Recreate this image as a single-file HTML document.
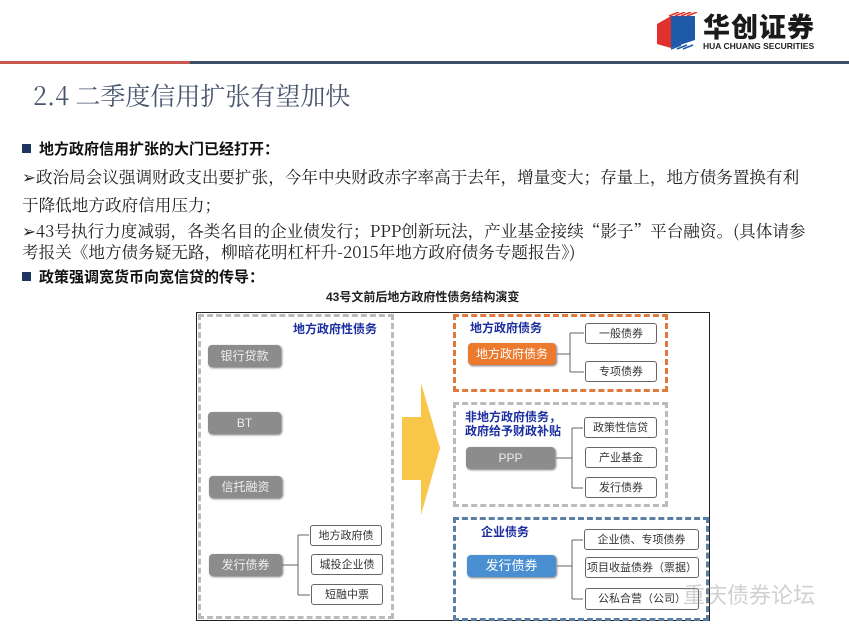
<!DOCTYPE html>
<html><head><meta charset="utf-8"><style>
body{margin:0;width:849px;height:639px;background:#fff;position:relative;overflow:hidden;font-family:"Noto Serif CJK SC","Liberation Serif",serif;color:#222}
.a{position:absolute;white-space:nowrap}
.h{font-family:"Liberation Sans","Noto Sans CJK SC",sans-serif;font-weight:bold;font-size:15px;color:#111}
.sq{display:inline-block;width:9px;height:9px;background:#1f3560;margin-right:8px;vertical-align:1px}
.t{font-size:16.6px;color:#222;line-height:20px}
.d{position:absolute;box-sizing:border-box}
.g{background:#8c8c8c;color:#eee;border-radius:4px;font-family:"Liberation Sans","Noto Sans CJK SC",sans-serif;font-size:12px;text-align:center;box-shadow:1px 1px 2px #777}
.w{background:#fff;border:1px solid #666;border-radius:3px;font-family:"Liberation Sans","Noto Sans CJK SC",sans-serif;font-size:11px;text-align:center;color:#333}
.bt{font-family:"Liberation Sans","Noto Sans CJK SC",sans-serif;font-weight:bold;font-size:12px;color:#1c2fa0}
</style></head><body>
<svg class="a" style="left:655px;top:12px" width="44" height="40" viewBox="0 0 44 40">
<polygon points="2,12 16,4 16,36 2,32" fill="#e2312c"/>
<polygon points="16,4 40,4 40,28 16,36" fill="#1f5aa8"/>
<g stroke="#e2312c" stroke-width="1.5"><line x1="14" y1="4" x2="24" y2="0"/><line x1="20" y1="4" x2="30" y2="0"/><line x1="26" y1="4" x2="36" y2="0"/><line x1="32" y1="4" x2="42" y2="0"/></g>
<g stroke="#1f5aa8" stroke-width="1.5"><line x1="16" y1="37" x2="26" y2="33"/><line x1="22" y1="37" x2="32" y2="33"/><line x1="28" y1="37" x2="38" y2="33"/></g>
</svg>
<div class="a" style="left:703px;top:11px;font-family:'Noto Sans CJK SC',sans-serif;font-weight:900;font-size:27px;line-height:30px;color:#1a1a1a;letter-spacing:1px">华创证券</div>
<div class="a" style="left:703px;top:41px;font-family:'Liberation Sans',sans-serif;font-weight:bold;font-size:8.5px;color:#222">HUA CHUANG SECURITIES</div>
<div class="d" style="left:0;top:61px;width:190px;height:3px;background:#c8584f"></div>
<div class="d" style="left:190px;top:61px;width:659px;height:3px;background:#3b4e66"></div>
<div class="a" style="left:33px;top:78px;font-size:25px;line-height:34px;color:#4a5670">2.4 二季度信用扩张有望加快</div>
<div class="a h" style="left:22px;top:138px"><span class="sq"></span>地方政府信用扩张的大门已经打开：</div>
<div class="a t" style="left:22px;top:166px">➢政治局会议强调财政支出要扩张，今年中央财政赤字率高于去年，增量变大；存量上，地方债务置换有利</div>
<div class="a t" style="left:22px;top:194px">于降低地方政府信用压力；</div>
<div class="a t" style="left:22px;top:220px">➢43号执行力度减弱，各类名目的企业债发行；PPP创新玩法，产业基金接续“影子”平台融资。(具体请参</div>
<div class="a t" style="left:22px;top:241px">考报关《地方债务疑无路，柳暗花明杠杆升-2015年地方政府债务专题报告》)</div>
<div class="a h" style="left:22px;top:266px"><span class="sq"></span>政策强调宽货币向宽信贷的传导：</div>
<div class="a" style="left:326px;top:288px;font-family:'Liberation Sans','Noto Sans CJK SC',sans-serif;font-weight:bold;font-size:12px;color:#222">43号文前后地方政府性债务结构演变</div>
<div class="d" style="left:196px;top:312px;width:514px;height:309px;border:1px solid #222"></div>
<div class="d" style="left:198px;top:314px;width:196px;height:305px;border:3px dashed #bbb"></div>
<div class="a bt" style="left:293px;top:320px">地方政府性债务</div>
<div class="d g" style="left:208px;top:345px;width:73px;height:22px;line-height:22px">银行贷款</div>
<div class="d g" style="left:208px;top:412px;width:73px;height:22px;line-height:22px">BT</div>
<div class="d g" style="left:209px;top:476px;width:73px;height:22px;line-height:22px">信托融资</div>
<div class="d g" style="left:209px;top:554px;width:73px;height:22px;line-height:22px">发行债券</div>
<div class="d w" style="left:310px;top:525px;width:72px;height:21px;line-height:20px">地方政府债</div>
<div class="d w" style="left:311px;top:554px;width:72px;height:21px;line-height:20px">城投企业债</div>
<div class="d w" style="left:311px;top:584px;width:72px;height:21px;line-height:20px">短融中票</div>
<svg class="a" style="left:0;top:0" width="849" height="639">
<path d="M282,565 H298 M298,535 V595 M298,535 H309 M298,595 H310" stroke="#666" fill="none"/>
<path d="M557,354 H570 M570,333 V372 M570,333 H584 M570,372 H584" stroke="#666" fill="none"/>
<path d="M556,458 H572 M572,428 V488 M572,428 H583 M572,488 H583" stroke="#666" fill="none"/>
<path d="M557,566 H572 M572,540 V599 M572,540 H583 M572,599 H583" stroke="#666" fill="none"/>
<polygon points="402,417 421,417 421,383 440,448 421,515 421,480 402,480" fill="#f8c74a"/>
</svg>
<div class="d" style="left:453px;top:314px;width:215px;height:78px;border:3px dashed #e07a3a"></div>
<div class="a bt" style="left:470px;top:319px">地方政府债务</div>
<div class="d g" style="left:468px;top:343px;width:88px;height:22px;line-height:22px;background:#ec7a2e;color:#fff">地方政府债务</div>
<div class="d w" style="left:585px;top:323px;width:72px;height:21px;line-height:20px">一般债券</div>
<div class="d w" style="left:585px;top:361px;width:72px;height:21px;line-height:20px">专项债券</div>
<div class="d" style="left:453px;top:402px;width:215px;height:105px;border:3px dashed #bbb"></div>
<div class="a bt" style="left:465px;top:410px;line-height:14px">非地方政府债务，<br>政府给予财政补贴</div>
<div class="d g" style="left:466px;top:447px;width:89px;height:22px;line-height:22px">PPP</div>
<div class="d w" style="left:584px;top:417px;width:73px;height:21px;line-height:20px">政策性信贷</div>
<div class="d w" style="left:585px;top:447px;width:72px;height:21px;line-height:20px">产业基金</div>
<div class="d w" style="left:585px;top:477px;width:72px;height:21px;line-height:20px">发行债券</div>
<div class="d" style="left:453px;top:517px;width:256px;height:104px;border:3px dashed #5a7fa3"></div>
<div class="a bt" style="left:481px;top:523px">企业债务</div>
<div class="d g" style="left:467px;top:555px;width:89px;height:22px;line-height:22px;background:#4a8fd2;color:#fff;font-size:13px">发行债券</div>
<div class="d w" style="left:584px;top:529px;width:115px;height:21px;line-height:20px">企业债、专项债券</div>
<div class="d w" style="left:585px;top:557px;width:114px;height:21px;line-height:20px">项目收益债券（票据）</div>
<div class="d w" style="left:585px;top:588px;width:114px;height:22px;line-height:20px">公私合营（公司）</div>
<div class="a" style="left:683px;top:580px;font-family:'Noto Sans CJK SC',sans-serif;font-size:22px;line-height:28px;color:rgba(150,150,150,0.45)">重庆债券论坛</div>
</body></html>
